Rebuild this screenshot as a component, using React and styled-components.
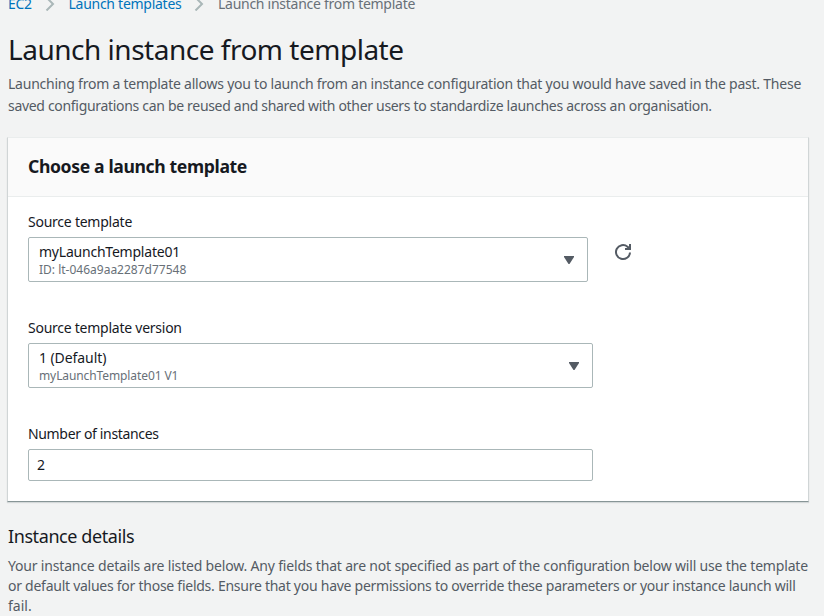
import React from 'react';
import styled, { createGlobalStyle } from 'styled-components';

const Global = createGlobalStyle`
  * { box-sizing: border-box; }
  body { margin: 0; background: #f2f3f3; overflow: hidden; font-family: "Noto Sans", sans-serif; color: #16191f; }
  h1, h2, h3, p { margin: 0; font-weight: 400; }
`;

const Page = styled.main`
  height: 616px;
  overflow: hidden;
  padding: 0 15px 0 8px;
`;

const Breadcrumbs = styled.nav`
  display: flex;
  align-items: center;
  height: 20px;
  margin-top: -6px;
  font-size: 14px;
  line-height: 20px;
  letter-spacing: -0.27px;
  color: #687078;
  white-space: nowrap;
`;

const Crumb = styled.a`
  color: #0073bb;
  width: ${(p) => p.$width}px;
`;

const Separator = styled.svg`
  width: 10px;
  height: 14px;
  margin: 0 ${(p) => p.$after}px 0 ${(p) => p.$before}px;
  flex: none;
`;

const Title = styled.h1`
  margin-top: 17px;
  font-size: 28px;
  line-height: 36px;
  letter-spacing: -0.49px;
  white-space: nowrap;
`;

const Line = styled.span`
  display: block;
  width: max-content;
  white-space: nowrap;
  letter-spacing: ${(p) => p.$track || 0}px;
`;

const Intro = styled.p`
  margin-top: 6px;
  font-size: 14px;
  line-height: 22px;
  color: #545b64;
`;

const Panel = styled.section`
  height: 365px;
  width: 802px;
  margin: 20px 0 0 -1px;
  background: #fff;
  border: 1px solid #d0d5d6;
  border-top-color: #eaeded;
  border-bottom-color: #879596;
  box-shadow: 0 1px 1px rgba(0, 28, 36, 0.12);
`;

const PanelHeader = styled.header`
  height: 59px;
  padding: 17px 20px 0;
  background: #fafafa;
  border-bottom: 1px solid #eaeded;
`;

const PanelTitle = styled.h2`
  font-size: 17.6px;
  line-height: 22px;
  letter-spacing: -0.37px;
  && { font-weight: 700; }
`;

const PanelBody = styled.div`
  padding: 15px 20px 0;
`;

const Field = styled.div`
  height: 106px;
`;

const Label = styled.label`
  display: block;
  font-size: 14px;
  line-height: 20px;
  margin-bottom: 5px;
  letter-spacing: ${(p) => p.$track || 0}px;
`;

const FieldRow = styled.div`
  display: flex;
`;

const Select = styled.div`
  display: flex;
  align-items: flex-start;
  justify-content: space-between;
  width: ${(p) => p.$width}px;
  height: 45px;
  padding: 5px 13px 0 10px;
  border: 1px solid #aab7b8;
  border-radius: 2px;
  background: #fff;
`;

const Option = styled.div`
  font-size: 14px;
  line-height: 18px;
  letter-spacing: ${(p) => p.$track || 0}px;
`;

const OptionDetail = styled.div`
  font-size: 12px;
  line-height: 18px;
  letter-spacing: ${(p) => p.$track || 0}px;
  color: #687078;
`;

const Caret = styled.svg`
  width: 10px;
  height: 8px;
  margin-top: 13px;
  fill: #545b64;
`;

const Refresh = styled.svg`
  width: 18px;
  height: 18px;
  margin: 6px 0 0 26px;
`;

const NumberField = styled.input`
  display: block;
  width: 565px;
  height: 32px;
  padding: 0 9px 2px 8px;
  border: 1px solid #aab7b8;
  border-radius: 2px;
  font: 14px "Noto Sans", sans-serif;
  color: #16191f;
`;

const SectionTitle = styled.h3`
  margin-top: 22px;
  font-size: 18px;
  line-height: 24px;
  letter-spacing: -0.41px;
`;

const SectionText = styled.p`
  margin-top: 8px;
  font-size: 14px;
  line-height: 20px;
  color: #545b64;
`;

const Chevron = ({ before, after }) => (
  <Separator $before={before} $after={after} viewBox="0 0 10 14" fill="none" stroke="#aab7b8" strokeWidth="2">
    <path d="M1.5 0.5l6.5 6.5-6.5 6.5" />
  </Separator>
);

const Dropdown = ({ width, value, detail, track, detailTrack }) => (
  <Select $width={width}>
    <div>
      <Option $track={track}>{value}</Option>
      <OptionDetail $track={detailTrack}>{detail}</OptionDetail>
    </div>
    <Caret viewBox="0 0 10 8"><path d="M0 0h10v1L5.5 8h-1L0 1z" /></Caret>
  </Select>
);

export default function App() {
  return (
    <Page>
      <Global />
      <Breadcrumbs>
        <Crumb $width={25}>EC2</Crumb>
        <Chevron before={12} after={13.5} />
        <Crumb $width={114}>Launch templates</Crumb>
        <Chevron before={11.5} after={14} />
        <span>Launch instance from template</span>
      </Breadcrumbs>
      <Title>Launch instance from template</Title>
      <Intro>
        <Line $track={-0.23}>Launching from a template allows you to launch from an instance configuration that you would have saved in the past. These</Line>
        <Line $track={-0.312}>saved configurations can be reused and shared with other users to standardize launches across an organisation.</Line>
      </Intro>
      <Panel>
        <PanelHeader><PanelTitle>Choose a launch template</PanelTitle></PanelHeader>
        <PanelBody>
          <Field>
            <Label $track={-0.24}>Source template</Label>
            <FieldRow>
              <Dropdown width={560} value="myLaunchTemplate01" detail="ID: lt-046a9aa2287d77548" track={-0.22} />
              <Refresh viewBox="0 0 18 18" fill="none" stroke="#545b64" strokeWidth="2">
                <path d="M16 9.5A7 7 0 1 1 13.5 3.7L15.5 5.5" />
                <path d="M15 1h2v6h-6V5h2.2L15 3.5z" fill="#545b64" stroke="none" />
              </Refresh>
            </FieldRow>
          </Field>
          <Field>
            <Label $track={-0.25}>Source template version</Label>
            <Dropdown width={565} value="1 (Default)" detail="myLaunchTemplate01 V1" track={-0.08} detailTrack={-0.1} />
          </Field>
          <Label htmlFor="count" $track={-0.34}>Number of instances</Label>
          <NumberField id="count" defaultValue="2" />
        </PanelBody>
      </Panel>
      <SectionTitle>Instance details</SectionTitle>
      <SectionText>
        <Line $track={-0.18}>Your instance details are listed below. Any fields that are not specified as part of the configuration below will use the template</Line>
        <Line $track={-0.26}>or default values for those fields. Ensure that you have permissions to override these parameters or your instance launch will</Line>
        <Line>fail.</Line>
      </SectionText>
    </Page>
  );
}
